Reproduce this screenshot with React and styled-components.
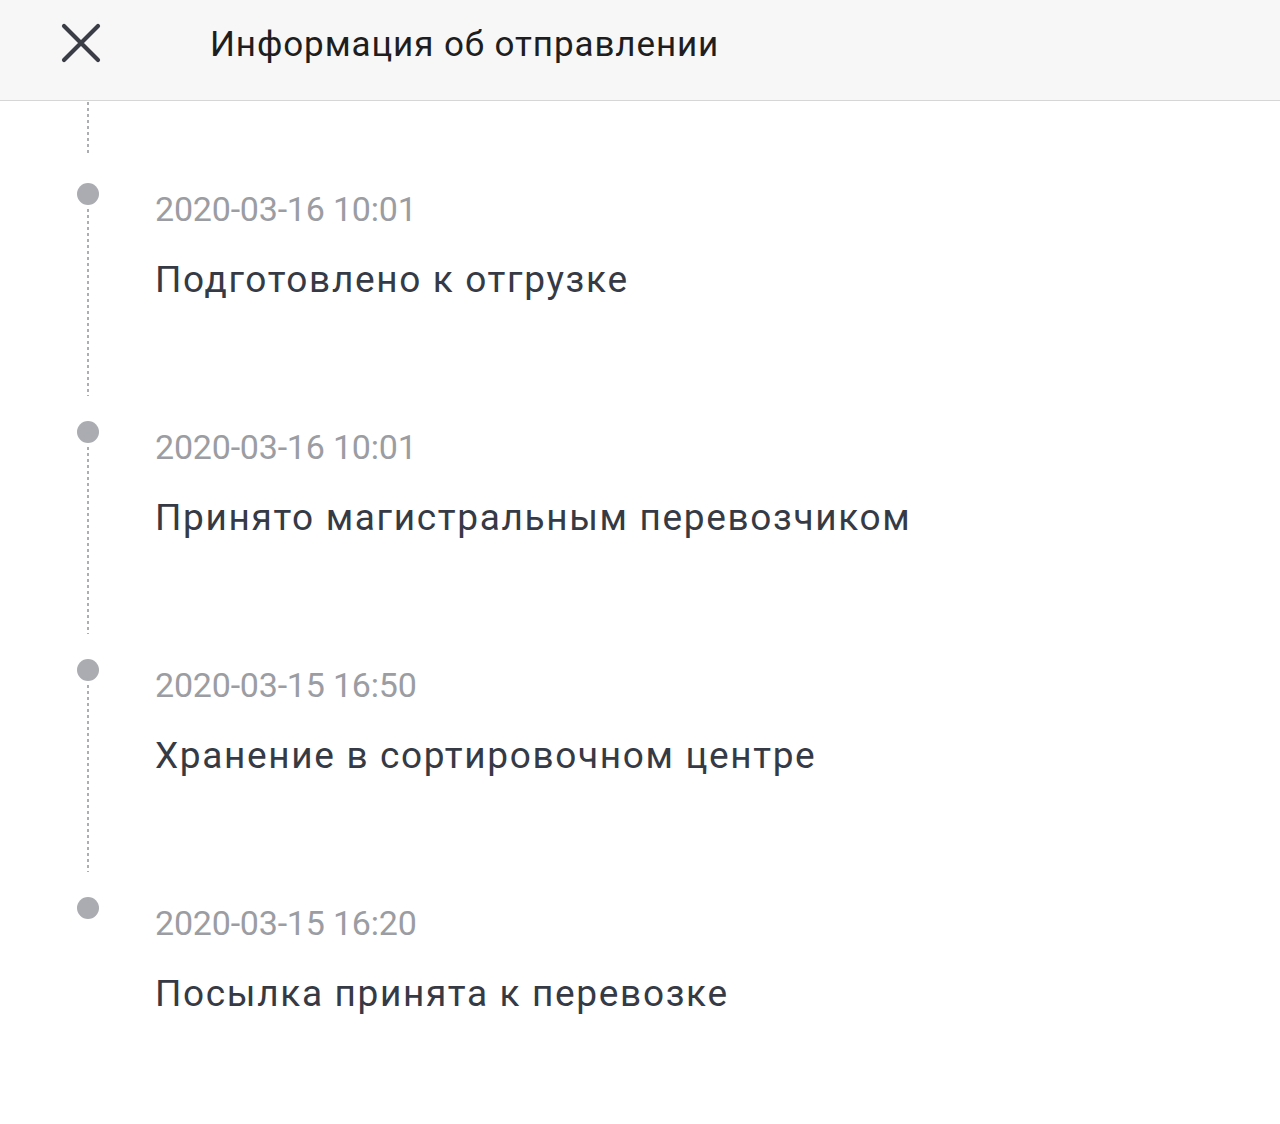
import React from "react";
import styled, { createGlobalStyle } from "styled-components";

const Global = createGlobalStyle`
  html, body { margin: 0; padding: 0; background: #ffffff; }
  body { font-family: Roboto, "Noto Sans", "Liberation Sans", sans-serif; }
`;

const Page = styled.div`
  width: 1280px;
  min-height: 1124px;
  background: #ffffff;
`;

const Header = styled.header`
  height: 100px;
  background: #f7f7f7;
  border-bottom: 1px solid #d6d6d6;
  display: flex;
  align-items: center;
  box-sizing: content-box;
`;

const CloseButton = styled.button`
  border: none;
  background: transparent;
  padding: 0;
  margin: 0 0 15px 60px;
  width: 42px;
  height: 42px;
  display: flex;
  align-items: center;
  justify-content: center;
  cursor: pointer;
`;

const Title = styled.h1`
  margin: 0 0 10px 108px;
  font-size: 35px;
  font-weight: 400;
  color: #1e1e20;
  line-height: 40px;
  letter-spacing: 0.9px;
  white-space: nowrap;
`;

const Timeline = styled.ol`
  list-style: none;
  margin: 0;
  padding: 1px 0 0 77px;
`;

const Tail = styled.li`
  width: 22px;
  height: 54px;
  margin-bottom: 27px;
  display: flex;
  justify-content: center;
`;

const Dashes = styled.span`
  width: 2px;
  height: 100%;
  background-image: linear-gradient(to bottom, #adaeb2 0 3px, transparent 3px 6px);
  background-size: 2px 6px;
  background-repeat: repeat-y;
`;

const Item = styled.li`
  height: 238px;
  display: grid;
  grid-template-columns: 22px 1fr;
  column-gap: 56px;
`;

const Rail = styled.div`
  display: flex;
  flex-direction: column;
  align-items: center;
  padding-bottom: 25px;
`;

const Dot = styled.span`
  width: 22px;
  height: 22px;
  border-radius: 50%;
  background: #abacb1;
  flex: none;
`;

const Connector = styled(Dashes)`
  flex: 1;
  margin-top: 4px;
  visibility: ${(p) => (p.$hidden ? "hidden" : "visible")};
`;

const Body = styled.div`
  padding-top: 6px;
`;

const Time = styled.div`
  font-size: 34px;
  line-height: 40px;
  color: #9b9da3;
  letter-spacing: -0.2px;
  white-space: nowrap;
`;

const Status = styled.div`
  margin-top: 29px;
  font-size: 37px;
  line-height: 44px;
  color: #363a45;
  letter-spacing: 1.65px;
  white-space: nowrap;
`;

const events = [
  { time: "2020-03-16 10:01", text: "Подготовлено к отгрузке" },
  { time: "2020-03-16 10:01", text: "Принято магистральным перевозчиком" },
  { time: "2020-03-15 16:50", text: "Хранение в сортировочном центре" },
  { time: "2020-03-15 16:20", text: "Посылка принята к перевозке" },
];

export default function App() {
  return (
    <Page>
      <Global />
      <Header>
        <CloseButton aria-label="Закрыть">
          <svg width="40" height="40" viewBox="0 0 40 40">
            <path
              d="M3 3 L37 37 M37 3 L3 37"
              stroke="#3a3d46"
              strokeWidth="4.2"
              strokeLinecap="round"
              fill="none"
            />
          </svg>
        </CloseButton>
        <Title>Информация об отправлении</Title>
      </Header>
      <Timeline>
        <Tail>
          <Dashes />
        </Tail>
        {events.map((e, i) => (
          <Item key={i}>
            <Rail>
              <Dot />
              <Connector $hidden={i === events.length - 1} />
            </Rail>
            <Body>
              <Time>{e.time}</Time>
              <Status>{e.text}</Status>
            </Body>
          </Item>
        ))}
      </Timeline>
    </Page>
  );
}
